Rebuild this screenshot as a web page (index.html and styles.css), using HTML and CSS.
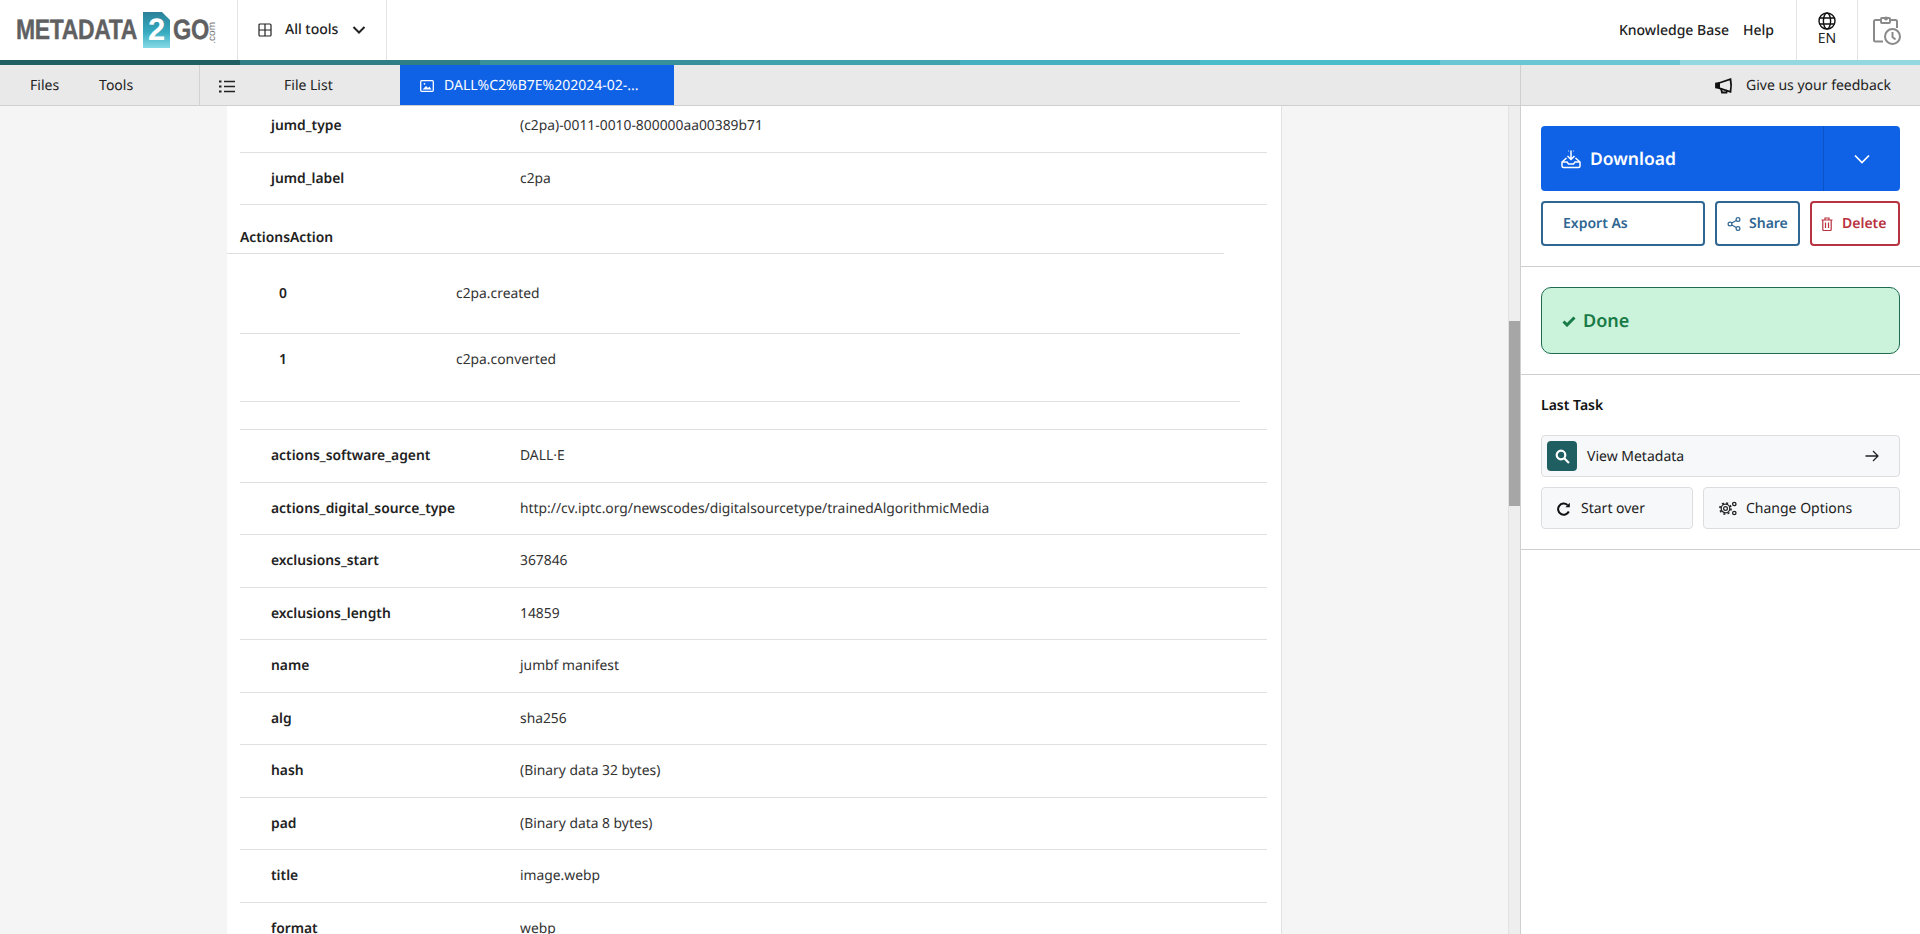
FILE: index.html
```html
<!DOCTYPE html>
<html lang="en">
<head>
<meta charset="utf-8">
<title>Metadata2Go</title>
<link rel="stylesheet" href="styles.css">
</head>
<body>
<header class="topbar">
  <a class="logo">
    <span class="logo-word">METADATA</span>
    <span class="logo-doc">2</span>
    <span class="logo-go">GO</span>
    <span class="logo-com">.com</span>
  </a>
  <div class="alltools">
    <svg class="ico" width="14" height="14" viewBox="0 0 14 14" fill="none" stroke="#222" stroke-width="1.2"><rect x="1" y="1" width="12" height="12" rx="1"/><path d="M7 1v12M1 7h12"/></svg>
    <span class="alltools-label">All tools</span>
    <svg width="14" height="10" viewBox="0 0 14 10" fill="none" stroke="#222" stroke-width="2"><path d="M1.5 2 7 7.5 12.5 2"/></svg>
  </div>
  <div class="topspacer"></div>
  <a class="toplink">Knowledge Base</a>
  <a class="toplink help">Help</a>
  <div class="lang">
    <svg width="18" height="18" viewBox="0 0 18 18" fill="none" stroke="#111" stroke-width="1.4"><circle cx="9" cy="9" r="8"/><ellipse cx="9" cy="9" rx="3.6" ry="8"/><path d="M1.6 6h14.8M1.6 12h14.8"/></svg>
    <span>EN</span>
  </div>
  <div class="history">
    <svg width="28" height="30" viewBox="0 0 28 30" fill="none" stroke="#8a8a8a" stroke-width="2"><path d="M8 4H2.500A1.500 1.500 0 0 0 1 5.500V24a1.500 1.500 0 0 0 1.500 1.500H10"/><path d="M17 4h5.500A1.500 1.500 0 0 1 24 5.500V12"/><rect x="8" y="2" width="9" height="5" rx="1"/><circle cx="13" cy="2.500" r="1" /><circle cx="19.500" cy="20.500" r="7.500" fill="#fff"/><path d="M19.500 16v5l3 2.500"/></svg>
  </div>
</header>
<div class="progress">
  <i class="p1"></i><i class="p2"></i><i class="p3"></i><i class="p4"></i><i class="p5"></i><i class="p6"></i><i class="p7"></i><i class="p8"></i>
</div>
<nav class="subnav">
  <div class="subnav-left"><a>Files</a><a>Tools</a></div>
  <a class="filelist">
    <svg width="16" height="13" viewBox="0 0 16 13" fill="none" stroke="#222" stroke-width="1.500"><path d="M5 1.500h11M5 6.500h11M5 11.500h11"/><path d="M0 1.500h2.500M0 6.500h2.500M0 11.500h2.500" stroke-width="2"/></svg>
    <span>File List</span>
  </a>
  <a class="filetab">
    <svg width="14" height="12" viewBox="0 0 14 12" fill="none" stroke="#fff" stroke-width="1.300"><rect x=".7" y=".7" width="12.600" height="10.600" rx="1"/><path d="M2.500 9.500 6 6l2 2 1.500-1.500 2 3z" fill="#fff" stroke="none"/><circle cx="4.500" cy="3.800" r=".9" fill="#fff" stroke="none"/></svg>
    <span>DALL%C2%B7E%202024-02-...</span>
  </a>
  <div class="subnav-fill"></div>
  <a class="feedback">
    <svg width="18" height="16" viewBox="0 0 18 16" fill="none" stroke="#111" stroke-width="1.800"><path d="M1 5.500v4l3 .5V5z" fill="#111"/><path d="M4 5 15.500 1.200c.8 4 .8 8.600 0 12.600L4 10z"/><path d="M6 10.500 7 14.500h4.500l.5-2.500"/></svg>
    <span>Give us your feedback</span>
  </a>
</nav>
<div class="workspace">
  <main class="stage">
    <div class="gutter"></div>
    <section class="sheet">
      <div class="rows">
        <div class="row"><b>jumd_type</b><span>(c2pa)-0011-0010-800000aa00389b71</span></div>
        <div class="row"><b>jumd_label</b><span>c2pa</span></div>
        <h4 class="group">ActionsAction</h4>
        <div class="subrow first"><b>0</b><span>c2pa.created</span></div>
        <div class="subrow"><b>1</b><span>c2pa.converted</span></div>
        <div class="rowgap"></div>
        <div class="row"><b>actions_software_agent</b><span>DALL·E</span></div>
        <div class="row"><b>actions_digital_source_type</b><span>http://cv.iptc.org/newscodes/digitalsourcetype/trainedAlgorithmicMedia</span></div>
        <div class="row"><b>exclusions_start</b><span>367846</span></div>
        <div class="row"><b>exclusions_length</b><span>14859</span></div>
        <div class="row"><b>name</b><span>jumbf manifest</span></div>
        <div class="row"><b>alg</b><span>sha256</span></div>
        <div class="row"><b>hash</b><span>(Binary data 32 bytes)</span></div>
        <div class="row"><b>pad</b><span>(Binary data 8 bytes)</span></div>
        <div class="row"><b>title</b><span>image.webp</span></div>
        <div class="row"><b>format</b><span>webp</span></div>
      </div>
    </section>
    <div class="backdrop"></div>
    <div class="scrolltrack"><div class="scrollthumb"></div></div>
  </main>
  <aside class="panel">
    <section class="pblock actions">
      <div class="download">
        <a class="download-main">
          <svg width="20" height="20" viewBox="0 0 20 20" fill="none" stroke="#fff" stroke-width="1.500"><path d="M10 1.500V10M6.500 7 10 10.500 13.500 7"/><path d="M7.500 2h-.5M12.500 2h.5"/><path d="M5.500 9 1 13v4a1.500 1.500 0 0 0 1.500 1.500h15A1.500 1.500 0 0 0 19 17v-4l-4.500-4"/><path d="M1 13h5l1.500 2h5L14 13h5"/></svg>
          <span>Download</span>
        </a>
        <a class="download-more">
          <svg width="16" height="10" viewBox="0 0 16 10" fill="none" stroke="#fff" stroke-width="1.700"><path d="M1 1.500 8 8.500l7-7"/></svg>
        </a>
      </div>
      <div class="btnrow">
        <a class="outline export">Export As</a>
        <a class="outline share">
          <svg width="14" height="14" viewBox="0 0 14 14" fill="none" stroke="#2f6692" stroke-width="1.200"><circle cx="11" cy="2.500" r="1.900"/><circle cx="3" cy="7" r="1.900"/><circle cx="11" cy="11.500" r="1.900"/><path d="M4.700 6 9.300 3.400M4.700 8l4.600 2.600"/></svg>
          <span>Share</span>
        </a>
        <a class="outline del">
          <svg width="12" height="14" viewBox="0 0 12 14" fill="none" stroke="#b8323f" stroke-width="1.200"><path d="M.5 3h11M4 3V1h4v2M1.800 3v9.500a1 1 0 0 0 1 1h6.400a1 1 0 0 0 1-1V3M4.500 5.500v5.500M7.500 5.500v5.500"/></svg>
          <span>Delete</span>
        </a>
      </div>
    </section>
    <section class="pblock status">
      <div class="done">
        <svg width="14" height="11" viewBox="0 0 14 11" fill="none" stroke="#187a46" stroke-width="3"><path d="M1.500 5.500 5 9l7.500-7.500"/></svg>
        <span>Done</span>
      </div>
    </section>
    <section class="pblock last">
      <h4>Last Task</h4>
      <a class="ghost view">
        <span class="view-ico">
          <svg width="15" height="15" viewBox="0 0 15 15" fill="none" stroke="#fff" stroke-width="2.200"><circle cx="6" cy="6" r="4.300"/><path d="m9.500 9.500 4.500 4.500"/></svg>
        </span>
        <span class="view-label">View Metadata</span>
        <svg width="14" height="12" viewBox="0 0 14 12" fill="none" stroke="#222" stroke-width="1.300"><path d="M.5 6h12.500M8 1l5 5-5 5"/></svg>
      </a>
      <div class="ghostrow">
        <a class="ghost start">
          <svg width="14" height="14" viewBox="0 0 14 14" fill="none" stroke="#111" stroke-width="2"><path d="M11.800 9.500A5.600 5.600 0 1 1 10.500 3"/><path d="M12.800 .8v4.400H8.400z" fill="#111" stroke="none"/></svg>
          <span>Start over</span>
        </a>
        <a class="ghost change">
          <svg width="18" height="15" viewBox="0 0 18 15" fill="none" stroke="#222"><circle cx="6.500" cy="7.500" r="1.900" stroke-width="1.200"/><circle cx="6.500" cy="7.500" r="4.300" stroke-width="1.200"/><circle cx="6.500" cy="7.500" r="5.600" stroke-width="1.600" stroke-dasharray="2 2.400"/><circle cx="15.300" cy="3" r="1.700" stroke-width="1.300"/><circle cx="15.300" cy="12" r="1.700" stroke-width="1.300"/></svg>
          <span>Change Options</span>
        </a>
      </div>
    </section>
  </aside>
</div>
</body>
</html>
```
FILE: styles.css
```css
* { box-sizing: border-box; }
html, body { margin: 0; height: 100%; overflow: hidden; }
body {
  display: flex;
  flex-direction: column;
  background: #fff;
  color: #222;
  font: 14px/20px "Noto Sans", "Open Sans", sans-serif;
  text-rendering: geometricPrecision;
}
a { color: inherit; text-decoration: none; }

/* Top bar */
.topbar { display: flex; align-items: center; height: 60px; flex: none; }
.logo { display: flex; align-items: center; width: 237px; height: 60px; padding-left: 16px; color: #5f6062; font-family: "Liberation Sans", sans-serif; font-weight: 700; }
.logo-word { width: 126px; font-size: 28px; letter-spacing: -.4px; white-space: nowrap; transform: scaleX(.82); transform-origin: left center; -webkit-text-stroke: .4px #5f6062; }
.logo-doc {
  display: flex; align-items: center; justify-content: center;
  width: 27px; height: 36px; margin-left: 1px;
  background: linear-gradient(#2a8199, #36a9bf 55%, #86dbe6);
  clip-path: polygon(0 0, 70% 0, 100% 22%, 100% 100%, 0 100%);
  color: #fff; font-size: 31px;
}
.logo-go { width: 36px; margin-left: 3px; font-size: 28px; white-space: nowrap; transform: scaleX(.84); transform-origin: left center; letter-spacing: -.4px; -webkit-text-stroke: .4px #5f6062; }
.logo-com { width: 8px; font-size: 10px; line-height: 8px; writing-mode: vertical-rl; transform: rotate(180deg); font-weight: 400; margin-top: 6px; color: #777; }
.alltools { display: flex; align-items: center; width: 150px; height: 60px; padding-left: 20px; border-left: 1px solid #e3e3e3; border-right: 1px solid #e3e3e3; }
.alltools-label { margin: 0 14px 0 13px; font-weight: 500; }
.topspacer { flex: 1; }
.toplink { font-weight: 500; white-space: nowrap; padding-top: 1px; }
.help { margin-left: 14px; margin-right: 22px; }
.lang { display: flex; flex-direction: column; align-items: center; justify-content: center; width: 62px; height: 60px; border-left: 1px solid #e3e3e3; border-right: 1px solid #e3e3e3; line-height: 18px; }
.history { display: flex; align-items: center; justify-content: center; width: 62px; height: 60px; padding: 2px 4px 0 0; }

/* Progress */
.progress { display: flex; height: 5px; flex: none; }
.progress i { flex: 1; }
.p1 { background: #1f5f61; }
.p2 { background: #2f7d85; }
.p3 { background: #38909c; }
.p4 { background: #3ea1ae; }
.p5 { background: #45b0c0; }
.p6 { background: #4abdca; }
.p7 { background: #69c7d4; }
.p8 { background: #93d8e1; }

/* Sub navigation */
.subnav { display: flex; align-items: stretch; height: 41px; flex: none; background: #e9e9e9; border-bottom: 1px solid #cfcfcf; }
.subnav-left { display: flex; align-items: center; gap: 40px; width: 200px; padding: 2px 0 0 30px; border-right: 1px solid #d2d2d2; }
.filelist { display: flex; align-items: center; width: 200px; padding: 2px 0 0 19px; }
.filelist span { margin-left: 49px; }
.filetab { display: flex; align-items: center; width: 274px; padding: 2px 0 0 20px; background: #0f62e6; color: #fff; height: 40px; }
.filetab span { margin-left: 10px; white-space: nowrap; }
.subnav-fill { flex: 1; border-right: 1px solid #cfcfcf; }
.feedback { display: flex; align-items: center; width: 399px; padding: 2px 0 0 194px; }
.feedback span { margin-left: 13px; white-space: nowrap; }

/* Main */
.workspace { display: flex; flex: 1; min-height: 0; }
.stage { display: flex; flex: 1; min-width: 0; background: #f5f5f5; }
.gutter { width: 227px; flex: none; }
.sheet { width: 1055px; flex: none; background: #fff; overflow: hidden; border-right: 1px solid #e2e2e2; color: #333; font-size: 13.85px; }
.rows { margin: -6px 0 0 0; }
.row { display: flex; height: 52.5px; margin: 0 14px 0 13px; padding: 16px 0 0 31px; border-bottom: 1px solid #e0e0e0; }
.row b { width: 249px; flex: none; font-weight: 600; color: #222; }
.group { margin: 0; height: 49px; padding: 23px 0 0 13px; width: 997px; border-bottom: 1px solid #dedede; font-size: 13.85px; font-weight: 600; color: #222; }
.subrow { display: flex; height: 67.5px; width: 1000px; margin-left: 13px; padding: 16px 0 0 39px; border-bottom: 1px solid #e0e0e0; }
.subrow.first { height: 80px; padding-top: 30px; }
.subrow b { width: 177px; flex: none; font-weight: 600; color: #222; }
.rowgap { height: 28.5px; margin: 0 14px 0 13px; border-bottom: 1px solid #e0e0e0; }
.backdrop { flex: 1; }
.scrolltrack { width: 12px; flex: none; background: #eeeeee; border-left: 1px solid #e2e2e2; }
.scrollthumb { height: 185px; margin-top: 215px; background: #a6a6a6; }

/* Right panel */
.panel { width: 400px; flex: none; border-left: 1px solid #cfcfcf; background: #fff; }
.pblock { padding: 0 20px; border-bottom: 1px solid #cfcfcf; }
.actions { height: 161px; padding-top: 20px; }
.download { display: flex; height: 65px; border-radius: 4px; background: #0f62e6; color: #fff; }
.download-main { flex: 1; display: flex; align-items: center; padding: 0 0 0 20px; font-size: 17.5px; font-weight: 600; }
.download-main span { margin-left: 9px; }
.download-more { display: flex; align-items: center; justify-content: center; width: 77px; border-left: 1px solid #0b54c7; }
.btnrow { display: flex; gap: 10px; margin-top: 10px; }
.outline { display: flex; align-items: center; height: 45px; border: 2px solid #2f6692; border-radius: 4px; color: #2f6692; font-weight: 600; background: #fff; padding-top: 1px; }
.export { width: 164px; padding-left: 20px; }
.share { width: 85px; padding-left: 10px; gap: 8px; }
.del { width: 90px; padding-left: 9px; gap: 9px; border-color: #b8323f; color: #b8323f; }
.status { height: 108px; padding-top: 20px; }
.done { display: flex; align-items: center; height: 67px; padding: 1px 0 0 20px; gap: 7px; border: 1px solid #1e6b52; border-radius: 10px; background: #cbf2da; color: #187a46; font-size: 18px; font-weight: 600; }
.last { height: 175px; padding-top: 21px; }
.last h4 { margin: 0 0 19px; font-size: 14px; font-weight: 600; color: #111; }
.ghost { display: flex; align-items: center; border: 1px solid #dcdde0; border-radius: 4px; background: #f7f8fa; }
.view { height: 42px; padding: 0 20px 0 5px; }
.view-ico { display: flex; align-items: center; justify-content: center; width: 30px; height: 30px; border-radius: 4px; background: #1f5f61; }
.view-label { flex: 1; margin-left: 10px; padding-top: 2px; }
.ghostrow { display: flex; gap: 10px; margin-top: 10px; }
.start { width: 152px; height: 42px; padding: 1px 0 0 15px; gap: 10px; }
.change { flex: 1; height: 42px; padding: 1px 0 0 15px; gap: 9px; }
```
